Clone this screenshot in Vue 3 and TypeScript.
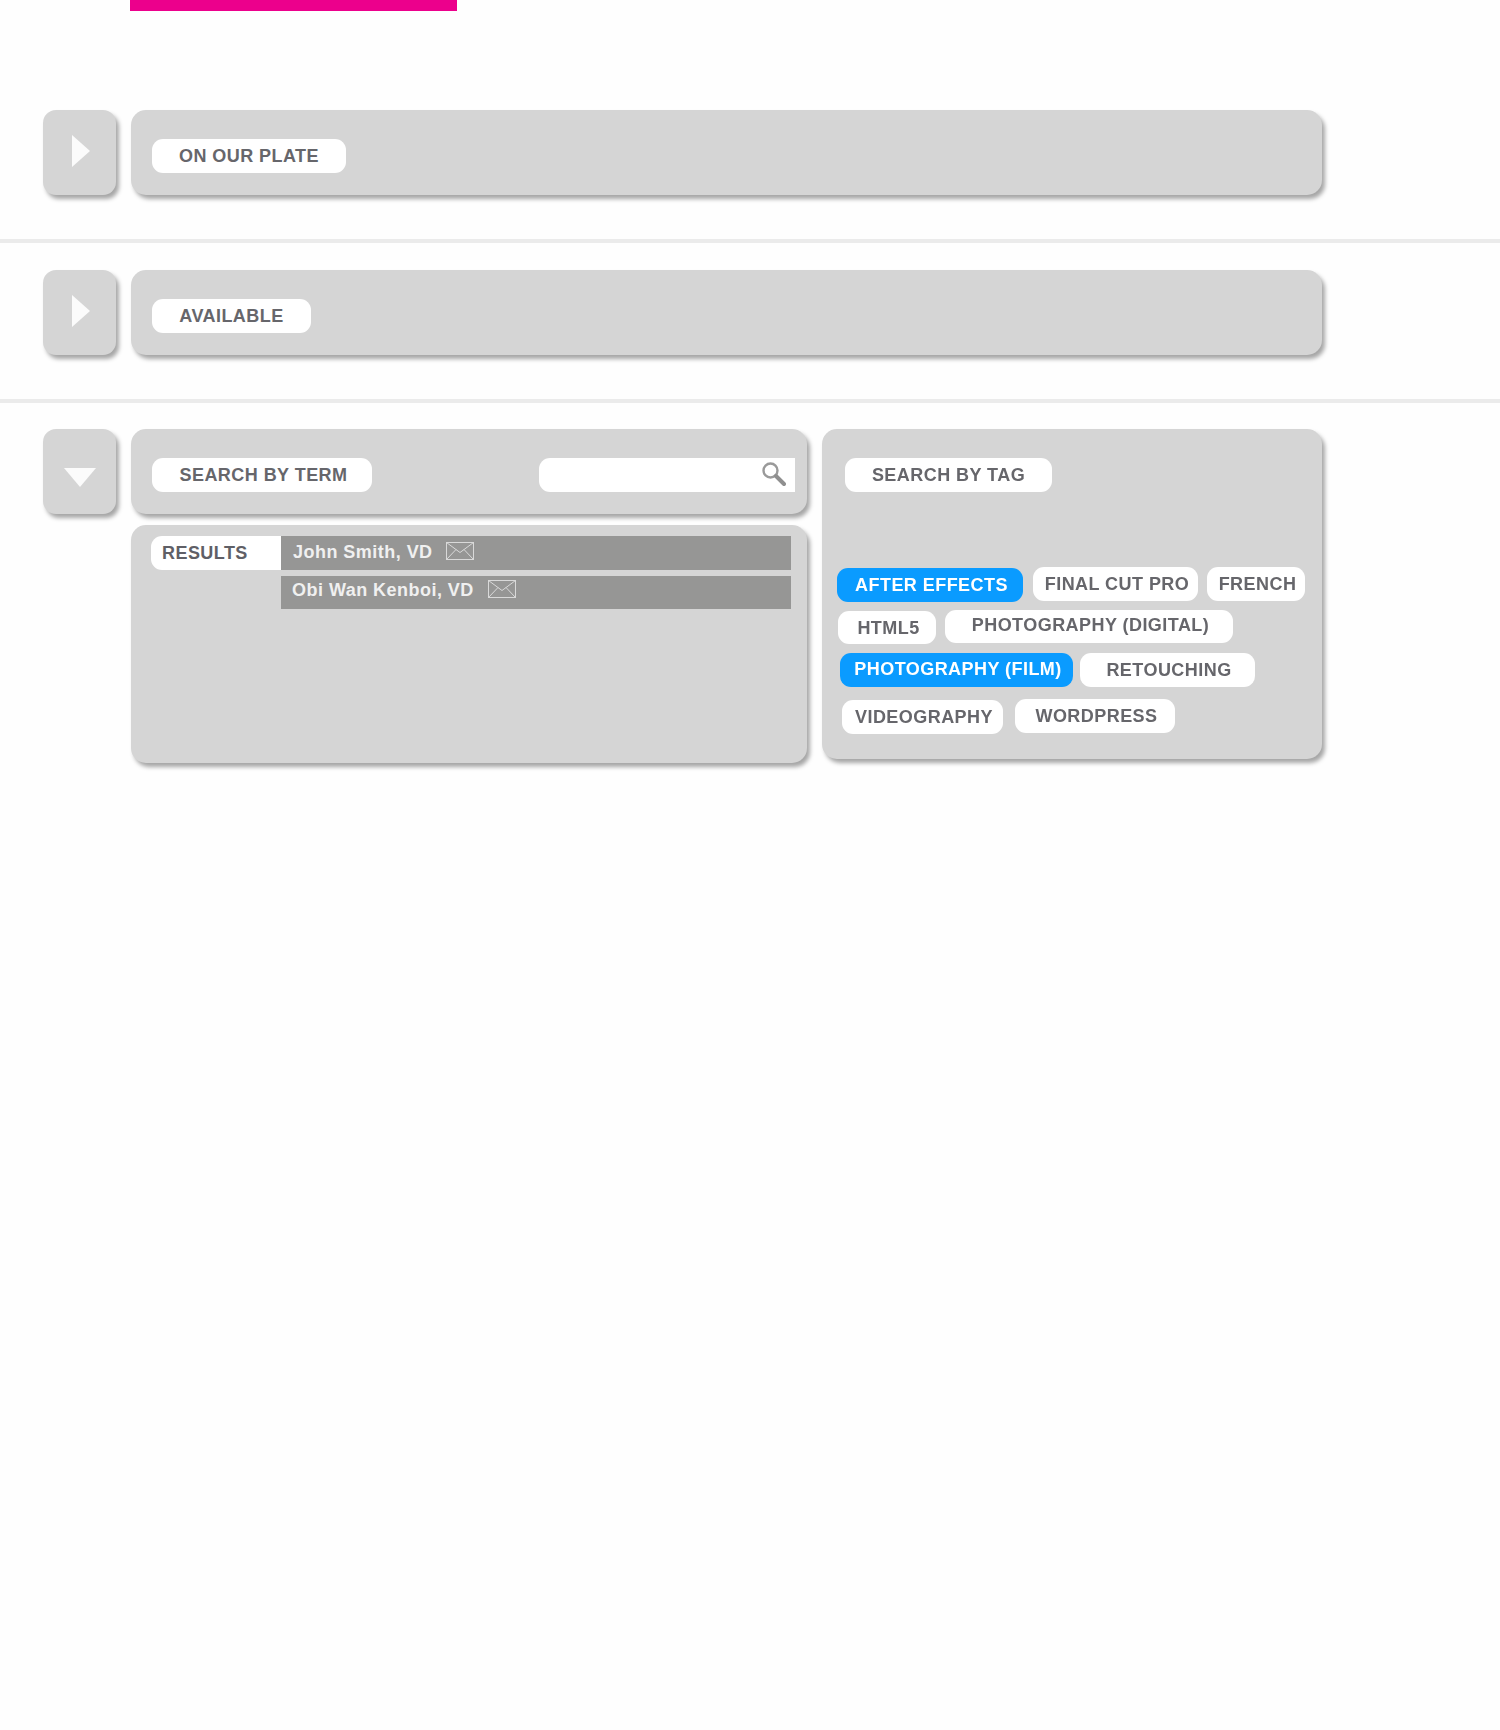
<script setup lang="ts">
interface Tag {
  label: string
  width: number
  left: number
  top: number
  active?: boolean
  high?: boolean
}

const tagRows: { gap: number; tags: Tag[] }[] = [
  {
    gap: 75,
    tags: [
      { label: 'AFTER EFFECTS', width: 186, left: 0, top: 1, active: true },
      { label: 'FINAL CUT PRO', width: 165, left: 10, top: 0 },
      { label: 'FRENCH', width: 98, left: 9, top: 0 },
    ],
  },
  {
    gap: 8,
    tags: [
      { label: 'HTML5', width: 98, left: 1, top: 1 },
      { label: 'PHOTOGRAPHY (DIGITAL)', width: 288, left: 9, top: 0, high: true },
    ],
  },
  {
    gap: 9,
    tags: [
      { label: 'PHOTOGRAPHY (FILM)', width: 233, left: 3, top: 0, active: true, high: true },
      { label: 'RETOUCHING', width: 175, left: 7, top: 0 },
    ],
  },
  {
    gap: 12.5,
    tags: [
      { label: 'VIDEOGRAPHY', width: 161, left: 5, top: 1 },
      { label: 'WORDPRESS', width: 160, left: 12, top: 0 },
    ],
  },
]

const results = ['John Smith, VD', 'Obi Wan Kenboi, VD']
</script>

<template>
  <div class="page">
    <div class="pink-bar"></div>

    <!-- On our plate -->
    <section class="section first">
      <div class="toggle">
        <svg class="arrow-right" width="18" height="32" viewBox="0 0 18 32"><path d="M0 0L18 16L0 32z" /></svg>
      </div>
      <div class="panel grow">
        <span class="pill plate">ON OUR PLATE</span>
      </div>
    </section>
    <div class="divider"></div>

    <!-- Available -->
    <section class="section">
      <div class="toggle">
        <svg class="arrow-right" width="18" height="32" viewBox="0 0 18 32"><path d="M0 0L18 16L0 32z" /></svg>
      </div>
      <div class="panel grow">
        <span class="pill available">AVAILABLE</span>
      </div>
    </section>
    <div class="divider"></div>

    <!-- Search -->
    <section class="section last">
      <div class="toggle">
        <svg class="arrow-down" width="32" height="19" viewBox="0 0 32 19"><path d="M0 0H32L16 19z" /></svg>
      </div>

      <div class="left-col">
        <div class="panel term-panel">
          <span class="pill term">SEARCH BY TERM</span>
          <div class="search-box">
            <svg width="24" height="25" viewBox="0 0 24 25" fill="none">
              <circle cx="8.5" cy="8.5" r="7" stroke="#9a9a9a" stroke-width="2.4" />
              <path d="M14 14L22 22" stroke="#8f8f8f" stroke-width="4" stroke-linecap="round" />
            </svg>
          </div>
        </div>

        <div class="panel results-panel">
          <div class="results-label">RESULTS</div>
          <div class="results-list">
            <div v-for="name in results" :key="name" class="result-row">
              <span class="result-name">{{ name }}</span>
              <svg class="mail" width="28" height="18" viewBox="0 0 28 18" fill="none">
                <rect x="0.5" y="0.5" width="27" height="17" />
                <path d="M0.5 0.5L14 10.5L27.5 0.5M0.5 17.5L10 7.5M27.5 17.5L18 7.5" />
              </svg>
            </div>
          </div>
        </div>
      </div>

      <div class="panel tag-panel">
        <span class="pill tag-title">SEARCH BY TAG</span>
        <div
          v-for="(row, i) in tagRows"
          :key="i"
          class="tag-row"
          :style="{ marginTop: row.gap + 'px' }"
        >
          <span
            v-for="tag in row.tags"
            :key="tag.label"
            class="tag"
            :class="{ active: tag.active, high: tag.high }"
            :style="{ width: tag.width + 'px', marginLeft: tag.left + 'px', marginTop: tag.top + 'px' }"
          >{{ tag.label }}</span>
        </div>
      </div>
    </section>
  </div>
</template>

<style>
html,
body {
  background: #fefefe;
}
</style>

<style scoped>
.page {
  width: 1500px;
  height: 1730px;
  font-family: 'Liberation Sans', Arial, sans-serif;
  overflow: hidden;
  /* the source is a soft, scaled up comp */
  filter: blur(0.55px);
}

.pink-bar {
  width: 327px;
  height: 11px;
  margin-left: 130px;
  background: #ec008c;
}

.section {
  display: flex;
  align-items: flex-start;
  gap: 15px;
  width: 1322px;
  padding: 27px 0 44px 43px;
  box-sizing: border-box;
}

.section.first {
  margin-top: 72px;
}

.section.last {
  padding-top: 26px;
}

.divider {
  height: 4px;
  background: #ebebeb;
}

.toggle,
.panel {
  background: #d5d5d5;
  box-shadow: 3px 4px 4px rgba(0, 0, 0, 0.35);
}

.toggle {
  flex: none;
  width: 73px;
  height: 85px;
  border-radius: 13px;
  display: flex;
  align-items: center;
  justify-content: center;
}

.toggle path {
  fill: #fbfbfb;
}

.arrow-right {
  margin: -3px 0 0 3px;
}

.arrow-down {
  margin: 12px 0 0 1px;
}

.panel {
  border-radius: 15px;
  box-sizing: border-box;
}

.panel.grow {
  flex: 1;
  height: 85px;
  padding: 29px 21px 0;
}

.pill {
  display: flex;
  align-items: center;
  justify-content: center;
  height: 34px;
  box-sizing: border-box;
  border-radius: 11px;
  background: #fff;
  color: #66666b;
  font-size: 18px;
  font-weight: 700;
  letter-spacing: 0.45px;
  white-space: nowrap;
}

.plate {
  width: 194px;
}

.available {
  width: 159px;
}

.term {
  width: 220px;
  padding: 1px 0 0 3px;
}

.tag-title {
  width: 207px;
  padding-top: 1px;
}

.left-col {
  flex: none;
  width: 676px;
  display: flex;
  flex-direction: column;
  gap: 11px;
}

.term-panel {
  height: 85px;
  padding: 29px 12px 0 21px;
  display: flex;
  justify-content: space-between;
  align-items: flex-start;
}

.search-box {
  width: 256px;
  height: 34px;
  background: #fff;
  border-radius: 11px 0 0 11px;
  box-sizing: border-box;
  padding: 4px 9px 0 0;
  display: flex;
  justify-content: flex-end;
}

.results-panel {
  height: 238px;
  padding: 11px 16px 0 20px;
  display: flex;
  align-items: flex-start;
}

.results-label {
  flex: none;
  width: 130px;
  height: 34px;
  line-height: 34px;
  padding-left: 11px;
  box-sizing: border-box;
  background: #fff;
  border-radius: 11px 0 0 11px;
  color: #5f5f66;
  font-size: 18px;
  font-weight: 700;
  letter-spacing: 0.45px;
}

.results-list {
  flex: 1;
  display: flex;
  flex-direction: column;
  gap: 6px;
}

.result-row {
  height: 33.5px;
  background: #969695;
  display: flex;
  align-items: center;
  padding-left: 11px;
  gap: 14px;
  color: #f0f0f0;
  font-size: 18px;
  font-weight: 700;
  letter-spacing: 0.47px;
  white-space: nowrap;
}

.result-name {
  margin-top: -3px;
}

.mail {
  margin-top: -6px;
}

.result-row:first-child .result-name {
  margin: -1px 0 0 1px;
}

.result-row:first-child .mail {
  margin: -3px 0 0 -1px;
}

.mail rect,
.mail path {
  stroke: #d9d9d9;
  stroke-width: 1;
}

.tag-panel {
  flex: none;
  width: 500px;
  height: 330px;
  padding: 29px 15px 0;
}

.tag-panel .pill {
  margin-left: 8px;
}

.tag-row {
  display: flex;
  align-items: flex-start;
}

.tag {
  flex: none;
  height: 33.5px;
  box-sizing: border-box;
  padding: 1.5px 0 0 3px;
  display: flex;
  align-items: center;
  justify-content: center;
  border-radius: 11px;
  background: #fff;
  color: #66666b;
  font-size: 18px;
  font-weight: 700;
  letter-spacing: 0.45px;
  white-space: nowrap;
}

.tag.active {
  background: #0a9bff;
  color: #fff;
}

.tag.high {
  padding: 0 0 2px 3px;
}

.tag.active.high {
  padding-top: 1.5px;
}
</style>
